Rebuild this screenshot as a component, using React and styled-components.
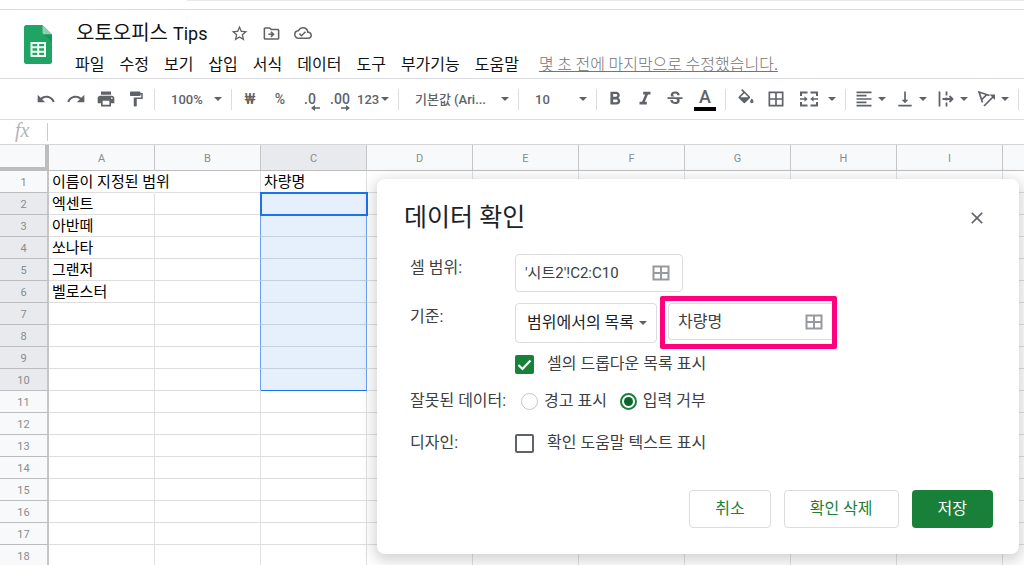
import React, { useState } from "react";
import styled, { createGlobalStyle } from "styled-components";
import {
  MdBorderAll,
  MdClose,
  MdFormatAlignLeft,
  MdFormatBold,
  MdFormatItalic,
  MdFormatPaint,
  MdOutlineCloudDone,
  MdOutlineDriveFileMove,
  MdPrint,
  MdRedo,
  MdStarBorder,
  MdStrikethroughS,
  MdUndo,
  MdVerticalAlignBottom,
} from "react-icons/md";

const GlobalStyle = createGlobalStyle`
  * {
    box-sizing: border-box;
  }
  body {
    margin: 0;
    background: #fff;
    color: #202124;
    font-family: Roboto, "Noto Sans CJK KR", sans-serif;
    font-size: 16px;
  }
  button,
  input,
  select {
    margin: 0;
    padding: 0;
    border: 0;
    background: none;
    color: inherit;
    font: inherit;
  }
`;

const Page = styled.div`
  position: relative;
  display: flex;
  flex-direction: column;
  height: 100vh;
  overflow: hidden;
`;

const TopStrip = styled.div`
  flex: none;
  height: 10px;
  padding-left: 187px;
  border-bottom: 1px solid #dcdcde;
  &::before {
    content: "";
    display: block;
    height: 1px;
    background: #e8e8ea;
  }
`;

const Header = styled.header`
  display: flex;
  flex: none;
  gap: 23px;
  padding: 8px 24px 0;
  border-bottom: 1px solid #dcdde3;
`;

const Logo = styled.svg`
  flex: none;
  width: 28px;
  height: 39px;
  margin-top: 7px;
`;

const TitleRow = styled.div`
  display: flex;
  align-items: center;
  height: 30px;
`;

const Title = styled.h1`
  margin: 0 16px 0 1px;
  color: #111;
  font-size: 20px;
  font-weight: 400;
  line-height: 30px;
  white-space: nowrap;
`;

const Latin = styled.span`
  font-size: 18px;
`;

const TitleButton = styled.button`
  display: flex;
  align-items: center;
  justify-content: center;
  width: 32px;
  height: 30px;
  color: #5f6368;
`;

const MenuBar = styled.nav`
  display: flex;
  gap: 15px;
  line-height: 30px;
  white-space: nowrap;
`;

const MenuItem = styled.button`
  flex: none;
  height: 30px;
  padding-top: 2px;
  color: #111;
`;

const LastEdit = styled.a`
  margin-left: 5px;
  color: #757575;
  font-family: "Noto Sans CJK KR", sans-serif;
  font-weight: 300;
`;

const Toolbar = styled.div`
  display: flex;
  flex: none;
  align-items: center;
  height: 41px;
  padding-left: 31px;
  border-bottom: 1px solid #dcdde3;
  color: #5f6368;
`;

const ToolButton = styled.button`
  position: relative;
  display: flex;
  flex: none;
  align-items: center;
  justify-content: center;
  width: 30px;
  height: 30px;
  font-size: 14px;
  font-weight: 500;
`;

const DropButton = styled.button`
  display: flex;
  flex: none;
  align-items: center;
  gap: ${(props) => (props.$wide ? 9 : 4)}px;
  width: ${(props) => (props.$wide ? 51 : 41)}px;
  height: 30px;
  padding-left: ${(props) => (props.$wide ? 8 : 5)}px;
`;

const NumberFormat = styled(DropButton)`
  gap: 2px;
  width: 40px;
  padding-left: 2px;
  font-size: 13px;
  font-weight: 500;
`;

const Caret = styled.span`
  flex: none;
  border: 4px solid transparent;
  border-top-color: currentColor;
  border-bottom-width: 0;
`;

const Separator = styled.span`
  flex: none;
  width: 1px;
  height: 21px;
  margin: 0 ${(props) => props.$gap || 3}px;
  background: #dadce0;
`;

const DecimalArrow = styled.svg`
  position: absolute;
  right: 5px;
  bottom: 3px;
  width: 9px;
  height: 6px;
`;

const ColorButton = styled(ToolButton)`
  flex-direction: column;
  gap: 1px;
  font-size: 18px;
  line-height: 18px;
  &::after {
    content: "";
    width: 22px;
    height: 4px;
    background: #000;
  }
`;

const SelectWrap = styled.span`
  display: grid;
  flex: none;
  align-items: center;
  width: ${(props) => props.$width}px;
  & > * {
    grid-area: 1 / 1;
  }
  & > ${Caret} {
    justify-self: end;
    margin-right: 6px;
    pointer-events: none;
  }
`;

const ToolSelect = styled.select`
  width: 100%;
  height: 30px;
  padding-left: 13px;
  appearance: none;
  font-size: 13px;
  font-weight: 500;
`;

const FormulaBar = styled.div`
  display: flex;
  flex: none;
  align-items: center;
  height: 25px;
  border-bottom: 1px solid #d5d5d5;
`;

const Fx = styled.label`
  flex: none;
  width: 47px;
  padding: 0 0 4px 15px;
  color: #b4b4b4;
  font-family: "Liberation Serif", serif;
  font-size: 20px;
  font-style: italic;
  line-height: 20px;
`;

const FormulaInput = styled.input`
  flex: 1;
  height: 18px;
  padding-left: 6px;
  border-left: 1px solid #ccc;
  outline: none;
`;

const Sheet = styled.main`
  flex: 1;
  min-height: 0;
  overflow: hidden;
`;

const Grid = styled.table`
  width: 1109px;
  table-layout: fixed;
  border-spacing: 0;
  border-collapse: separate;
`;

const Corner = styled.td`
  width: 49px;
  height: 26px;
  padding: 0;
  border-right: 4px solid #bdbdbd;
  border-bottom: 4px solid #bdbdbd;
  background: #f8f9fa;
`;

const ColHead = styled.th`
  height: 26px;
  padding: 1px 0 0;
  border-right: 1px solid #c6c6c6;
  border-bottom: 1px solid #bdbdbd;
  background: ${(props) => (props.$selected ? "#e8eaed" : "#f8f9fa")};
  color: #888c91;
  font-size: 11px;
  font-weight: 400;
`;

const RowHead = styled(ColHead)`
  height: 22px;
  border-right: 2px solid #c6c6c6;
`;

const selectionSide = "#69a1f4";

const Cell = styled.td`
  height: 22px;
  padding: 0 3px;
  border-right: 1px solid
    ${(props) =>
      props.$edge ? selectionSide : props.$spill ? "transparent" : "#e0e0e0"};
  border-bottom: 1px solid ${(props) => (props.$last ? "#1a73e8" : "#dedede")};
  background: ${(props) => (props.$selected ? "#e6effc" : "transparent")};
  color: #000;
  font-size: 15px;
  line-height: 20px;
  white-space: nowrap;
  ${(props) =>
    props.$selected && !props.$last && "border-bottom-color: #c5d0df;"}
  ${(props) =>
    props.$active &&
    "outline: 2px solid #1a73e8; outline-offset: -1px; position: relative;"}
`;

const Dialog = styled.section`
  position: absolute;
  top: 179px;
  right: 5px;
  width: 642px;
  padding: 20px 26px 26px 27px;
  border-radius: 8px;
  background: #fff;
  box-shadow: 0 4px 14px 3px rgba(0, 0, 0, 0.17);
  color: #3c4043;
`;

const DialogHeader = styled.div`
  display: flex;
  align-items: center;
  justify-content: space-between;
  height: 38px;
`;

const DialogTitle = styled.h2`
  margin: 0;
  color: #202124;
  font-size: 25px;
  font-weight: 400;
  line-height: 38px;
`;

const CloseButton = styled.button`
  display: flex;
  align-items: center;
  justify-content: center;
  width: 32px;
  height: 32px;
  color: #5f6368;
`;

const FormRow = styled.div`
  display: flex;
  align-items: ${(props) => (props.$top ? "flex-start" : "center")};
  margin-top: ${(props) => props.$gap}px;
  padding-left: 6px;
  line-height: 28px;
`;

const RowLabel = styled.label`
  flex: none;
  width: 105px;
  padding-top: ${(props) => props.$drop || 0}px;
  white-space: nowrap;
`;

const Fields = styled.div`
  display: flex;
  align-items: center;
  gap: 3px;
`;

const RangeBox = styled.span`
  display: flex;
  align-items: center;
  width: 168px;
  height: 38px;
  padding: 0 12px 0 9px;
  border: 1px solid #dadce0;
  border-radius: 4px;
`;

const RangeInput = styled.input`
  flex: 1;
  min-width: 0;
  font-size: ${(props) => props.$size}px;
  outline: none;
`;

const RangeButton = styled.button`
  display: flex;
  flex: none;
  color: #96999d;
`;

const Highlight = styled.span`
  display: flex;
  width: 177px;
  padding: 2px 0 4px 3px;
  border: 5px solid #ff007f;
  border-radius: 2px;
  & > ${RangeBox} {
    width: 100%;
    height: 37px;
    padding-right: 9px;
    border-right: 0;
    border-radius: 4px 0 0 4px;
  }
`;

const CriteriaSelect = styled.select`
  width: 100%;
  height: 40px;
  padding-left: 11px;
  border: 1px solid #dadce0;
  border-radius: 4px;
  appearance: none;
  color: #202124;
`;

const CriteriaWrap = styled(SelectWrap)`
  color: #5f6368;
  & > ${Caret} {
    margin-right: 10px;
  }
`;

const Option = styled.label`
  display: flex;
  align-items: center;
  gap: ${(props) => (props.$radio ? 6 : 13)}px;
  height: 20px;
  white-space: nowrap;
`;

const Checkbox = styled.input.attrs({ type: "checkbox" })`
  width: 19px;
  height: 19px;
  appearance: none;
  border: 2px solid #5f6368;
  border-radius: 2px;
  &:checked {
    border-color: #188038;
    background: #188038
      url("data:image/svg+xml,%3Csvg xmlns='http://www.w3.org/2000/svg' viewBox='0 0 15 15'%3E%3Cpath d='M1.500 8l4 4L13.500 3.500' fill='none' stroke='white' stroke-width='2.200'/%3E%3C/svg%3E");
  }
`;

const Radio = styled.input.attrs({ type: "radio" })`
  width: 17px;
  height: 17px;
  appearance: none;
  border: 1px solid #c4c6c9;
  border-radius: 50%;
  &:checked {
    border: 2px solid #188038;
    background: #0d652d content-box;
    padding: 2px;
  }
`;

const RadioGroup = styled.div`
  display: flex;
  gap: 13px;
  padding-left: 6px;
`;

const Actions = styled.div`
  display: flex;
  justify-content: flex-end;
  gap: 13px;
  margin-top: 33px;
`;

const ActionButton = styled.button`
  height: 38px;
  padding: 0 ${(props) => (props.$primary ? 26 : 25)}px 4px;
  border: ${(props) => (props.$primary ? "0" : "1px solid #dadce0")};
  border-radius: 4px;
  background: ${(props) => (props.$primary ? "#188038" : "#fff")};
  color: ${(props) => (props.$primary ? "#fff" : "#188038")};
`;

const menus = [
  "파일",
  "수정",
  "보기",
  "삽입",
  "서식",
  "데이터",
  "도구",
  "부가기능",
  "도움말",
];

const columns = ["A", "B", "C", "D", "E", "F", "G", "H", "I", ""];

const cellValues = {
  A1: "이름이 지정된 범위",
  C1: "차량명",
  A2: "엑센트",
  A3: "아반떼",
  A4: "쏘나타",
  A5: "그랜저",
  A6: "벨로스터",
};

const rows = Array.from({ length: 18 }, (_, i) => i + 1);

const inRange = (row) => row >= 2 && row <= 10;

const SheetsLogo = () => (
  <Logo viewBox="0 0 28 39" aria-hidden="true">
    <path
      d="M2.500 0H18.500L28 9.500V36.500A2.500 2.500 0 0 1 25.500 39H2.500A2.500 2.500 0 0 1 0 36.500V2.500A2.500 2.500 0 0 1 2.500 0Z"
      fill="#1fa463"
    />
    <path d="M18.500 0L28 9.500H20.500A2 2 0 0 1 18.500 7.500Z" fill="#8ed1b1" />
    <path d="M20 9.500H28V17Z" fill="#18935a" />
    <path
      d="M6.500 17H22V32H6.500ZM8.500 19V21.300H13.200V19ZM15.200 19V21.300H20V19ZM8.500 23.300V25.700H13.200V23.300ZM15.200 23.300V25.700H20V23.300ZM8.500 27.700V30H13.200V27.700ZM15.200 27.700V30H20V27.700Z"
      fill="#f4fbf7"
      fillRule="evenodd"
    />
  </Logo>
);

const FillIcon = () => (
  <svg
    width="20"
    height="20"
    viewBox="0 0 24 24"
    fill="currentColor"
    aria-hidden="true"
  >
    <path d="M16.560 8.940L7.620 0 6.210 1.410l2.380 2.380-5.150 5.150c-.59.59-.59 1.540 0 2.120l5.500 5.500c.29.29.68.44 1.060.44s.77-.15 1.060-.44l5.500-5.500c.59-.58.59-1.530 0-2.120zM5.210 10L10 5.210 14.790 10H5.210zM19 11.500s-2 2.170-2 3.500c0 1.100.9 2 2 2s2-.9 2-2c0-1.330-2-3.500-2-3.500z" />
  </svg>
);

const MergeIcon = () => (
  <svg
    width="20"
    height="20"
    viewBox="0 0 20 20"
    fill="none"
    stroke="currentColor"
    strokeWidth="2"
    aria-hidden="true"
  >
    <path d="M2 7V3.500H8.500M11.500 3.500H18V7M2 13V16.500H8.500M11.500 16.500H18V13" />
    <path d="M1 10H6M19 10H14" strokeWidth="1.600" />
    <path
      d="M5.500 7.200V12.800L8.700 10ZM14.500 7.200V12.800L11.300 10Z"
      fill="currentColor"
      stroke="none"
    />
  </svg>
);

const OverflowIcon = () => (
  <svg
    width="20"
    height="20"
    viewBox="0 0 20 20"
    fill="none"
    stroke="currentColor"
    strokeWidth="1.800"
    aria-hidden="true"
  >
    <path d="M3.500 2.500V17.500M10.500 2.500V6.500M10.500 13.500V17.500M6.500 10H16M13.500 7L16.500 10L13.500 13M10.500 8.500V11.500" />
  </svg>
);

const RotateIcon = () => (
  <svg
    width="20"
    height="20"
    viewBox="0 0 20 20"
    fill="none"
    stroke="currentColor"
    strokeWidth="1.700"
    aria-hidden="true"
  >
    <path d="M5.500 13.500L2 3L12.500 6.500M4.800 10.500L9.500 5.800" />
    <path d="M7 17L16 8" />
    <path d="M12.500 5.500H18V11Z" fill="currentColor" stroke="none" />
  </svg>
);

const RangeIcon = () => (
  <svg
    width="18"
    height="16"
    viewBox="0 0 18 16"
    fill="none"
    stroke="currentColor"
    strokeWidth="2"
    aria-hidden="true"
  >
    <path d="M1.500 1.500H16.500V14.500H1.500ZM9 1.500V14.500M1.500 8H16.500" />
  </svg>
);

const SmallArrow = ({ right }) => (
  <DecimalArrow viewBox="0 0 9 6" aria-hidden="true">
    <path
      d={
        right
          ? "M0 2.200H5V0L9 3L5 6V3.800H0Z"
          : "M9 2.200H4V0L0 3L4 6V3.800H9Z"
      }
      fill="currentColor"
    />
  </DecimalArrow>
);

const SheetToolbar = () => (
  <Toolbar role="toolbar">
    <ToolButton aria-label="실행취소">
      <MdUndo size={20} />
    </ToolButton>
    <ToolButton aria-label="재실행">
      <MdRedo size={20} />
    </ToolButton>
    <ToolButton aria-label="인쇄">
      <MdPrint size={20} />
    </ToolButton>
    <ToolButton aria-label="서식 복사">
      <MdFormatPaint size={18} />
    </ToolButton>
    <Separator />
    <SelectWrap $width={70}>
      <ToolSelect aria-label="확대/축소">
        <option>100%</option>
      </ToolSelect>
      <Caret />
    </SelectWrap>
    <Separator />
    <ToolButton>₩</ToolButton>
    <ToolButton>%</ToolButton>
    <ToolButton>
      .0
      <SmallArrow />
    </ToolButton>
    <ToolButton>
      .00
      <SmallArrow right />
    </ToolButton>
    <NumberFormat>
      123
      <Caret />
    </NumberFormat>
    <Separator />
    <SelectWrap $width={113}>
      <ToolSelect aria-label="글꼴">
        <option>기본값 (Ari...</option>
      </ToolSelect>
      <Caret />
    </SelectWrap>
    <Separator />
    <SelectWrap $width={71}>
      <ToolSelect aria-label="글꼴 크기">
        <option>10</option>
      </ToolSelect>
      <Caret />
    </SelectWrap>
    <Separator />
    <ToolButton aria-label="굵게">
      <MdFormatBold size={22} />
    </ToolButton>
    <ToolButton aria-label="기울임꼴">
      <MdFormatItalic size={22} />
    </ToolButton>
    <ToolButton aria-label="취소선">
      <MdStrikethroughS size={20} />
    </ToolButton>
    <ColorButton>A</ColorButton>
    <Separator $gap={5} />
    <ToolButton aria-label="채우기 색상">
      <FillIcon />
    </ToolButton>
    <ToolButton aria-label="테두리">
      <MdBorderAll size={20} />
    </ToolButton>
    <DropButton $wide aria-label="셀 병합">
      <MergeIcon />
      <Caret />
    </DropButton>
    <Separator />
    <DropButton aria-label="가로 맞춤">
      <MdFormatAlignLeft size={20} />
      <Caret />
    </DropButton>
    <DropButton aria-label="세로 맞춤">
      <MdVerticalAlignBottom size={20} />
      <Caret />
    </DropButton>
    <DropButton aria-label="텍스트 줄바꿈">
      <OverflowIcon />
      <Caret />
    </DropButton>
    <DropButton aria-label="텍스트 회전">
      <RotateIcon />
      <Caret />
    </DropButton>
    <Separator $gap={5} />
  </Toolbar>
);

const SheetGrid = () => (
  <Grid>
    <thead>
      <tr>
        <Corner />
        {columns.map((name) => (
          <ColHead key={name} scope="col" $selected={name === "C"}>
            {name}
          </ColHead>
        ))}
      </tr>
    </thead>
    <tbody>
      {rows.map((row) => (
        <tr key={row}>
          <RowHead scope="row" $selected={inRange(row)}>
            {row}
          </RowHead>
          {columns.map((name) => {
            const selected = name === "C" && inRange(row);
            return (
              <Cell
                key={name}
                $selected={selected}
                $active={selected && row === 2}
                $last={selected && row === 10}
                $edge={inRange(row) && (name === "B" || name === "C")}
                $spill={name + row === "A1"}
              >
                {cellValues[name + row]}
              </Cell>
            );
          })}
        </tr>
      ))}
    </tbody>
  </Grid>
);

const ValidationDialog = () => {
  const [range, setRange] = useState("'시트2'!C2:C10");
  const [source, setSource] = useState("차량명");
  return (
    <Dialog role="dialog" aria-labelledby="dialog-title">
      <DialogHeader>
        <DialogTitle id="dialog-title">데이터 확인</DialogTitle>
        <CloseButton aria-label="닫기">
          <MdClose size={20} />
        </CloseButton>
      </DialogHeader>
      <FormRow $gap={17} $top>
        <RowLabel htmlFor="range">셀 범위:</RowLabel>
        <RangeBox>
          <RangeInput
            id="range"
            $size={15}
            value={range}
            onChange={(e) => setRange(e.target.value)}
          />
          <RangeButton aria-label="범위 선택">
            <RangeIcon />
          </RangeButton>
        </RangeBox>
      </FormRow>
      <FormRow $gap={4} $top>
        <RowLabel htmlFor="criteria" $drop={7}>
          기준:
        </RowLabel>
        <Fields>
          <CriteriaWrap $width={142}>
            <CriteriaSelect id="criteria">
              <option>범위에서의 목록</option>
            </CriteriaSelect>
            <Caret />
          </CriteriaWrap>
          <Highlight>
            <RangeBox>
              <RangeInput
                aria-label="기준 범위"
                $size={16}
                value={source}
                onChange={(e) => setSource(e.target.value)}
              />
              <RangeButton aria-label="범위 선택">
                <RangeIcon />
              </RangeButton>
            </RangeBox>
          </Highlight>
        </Fields>
      </FormRow>
      <FormRow $gap={5}>
        <RowLabel as="span" />
        <Option>
          <Checkbox defaultChecked />셀의 드롭다운 목록 표시
        </Option>
      </FormRow>
      <FormRow $gap={13}>
        <RowLabel as="span">잘못된 데이터:</RowLabel>
        <RadioGroup role="radiogroup" aria-label="잘못된 데이터">
          <Option $radio>
            <Radio name="invalid" />
            경고 표시
          </Option>
          <Option $radio>
            <Radio name="invalid" defaultChecked />
            입력 거부
          </Option>
        </RadioGroup>
      </FormRow>
      <FormRow $gap={14}>
        <RowLabel as="span">디자인:</RowLabel>
        <Option>
          <Checkbox />
          확인 도움말 텍스트 표시
        </Option>
      </FormRow>
      <Actions>
        <ActionButton>취소</ActionButton>
        <ActionButton>확인 삭제</ActionButton>
        <ActionButton $primary>저장</ActionButton>
      </Actions>
    </Dialog>
  );
};

export default function App() {
  return (
    <Page>
      <GlobalStyle />
      <TopStrip />
      <Header>
        <SheetsLogo />
        <div>
          <TitleRow>
            <Title>
              오토오피스 <Latin>Tips</Latin>
            </Title>
            <TitleButton aria-label="별표">
              <MdStarBorder size={19} />
            </TitleButton>
            <TitleButton aria-label="이동">
              <MdOutlineDriveFileMove size={19} />
            </TitleButton>
            <TitleButton aria-label="문서 상태">
              <MdOutlineCloudDone size={18} />
            </TitleButton>
          </TitleRow>
          <MenuBar>
            {menus.map((menu) => (
              <MenuItem key={menu}>{menu}</MenuItem>
            ))}
            <LastEdit href="#history">
              몇 초 전에 마지막으로 수정했습니다.
            </LastEdit>
          </MenuBar>
        </div>
      </Header>
      <SheetToolbar />
      <FormulaBar>
        <Fx htmlFor="formula">fx</Fx>
        <FormulaInput id="formula" />
      </FormulaBar>
      <Sheet>
        <SheetGrid />
      </Sheet>
      <ValidationDialog />
    </Page>
  );
}
